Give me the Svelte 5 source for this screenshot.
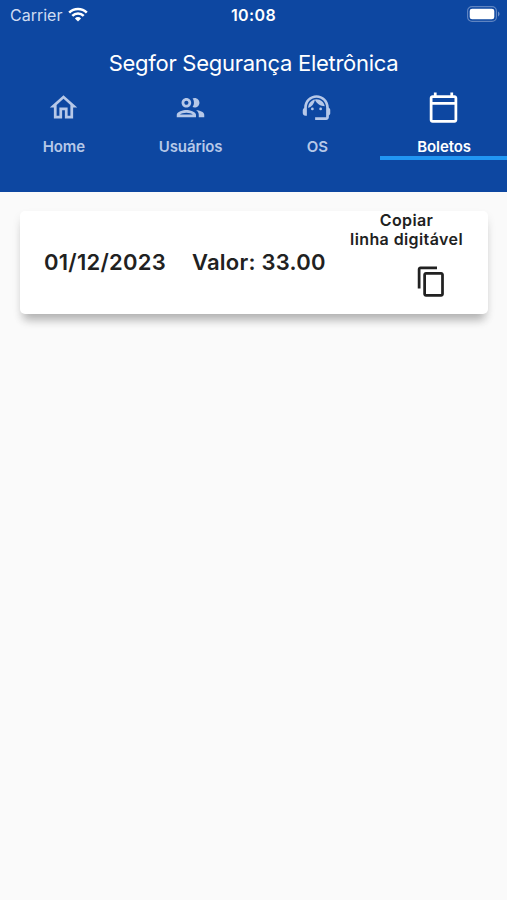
<script>
	let active = 'Boletos'

	const tabs = [
		{
			label: 'Home',
			path: 'M12 5.69l5 4.5V18h-2v-6H9v6H7v-7.81l5-4.5M12 3L2 12h3v8h6v-6h2v6h6v-8h3L12 3z'
		},
		{
			label: 'Usuários',
			path: 'M9 13.75c-2.34 0-7 1.17-7 3.5V19h14v-1.75c0-2.33-4.66-3.5-7-3.5zM4.34 17c.84-.58 2.87-1.25 4.66-1.25s3.82.67 4.66 1.25H4.34zM9 12c1.93 0 3.5-1.57 3.5-3.5S10.93 5 9 5 5.5 6.57 5.5 8.5 7.07 12 9 12zm0-5c.83 0 1.5.67 1.5 1.5S9.83 10 9 10s-1.5-.67-1.5-1.5S8.17 7 9 7zm7.04 6.81c1.16.84 1.96 1.96 1.96 3.44V19h4v-1.75c0-2.02-3.5-3.17-5.96-3.44zM15 12c1.93 0 3.5-1.57 3.5-3.5S16.93 5 15 5c-.54 0-1.04.13-1.5.35.63.89 1 1.98 1 3.15s-.37 2.26-1 3.15c.46.22.96.35 1.5.35z'
		},
		{
			label: 'OS',
			path: 'M21 12.22C21 6.73 16.74 3 12 3c-4.69 0-9 3.65-9 9.28-.6.34-1 .98-1 1.72v2c0 1.1.9 2 2 2h1v-6.1c0-3.87 3.13-7 7-7s7 3.13 7 7V19h-8v2h8c1.1 0 2-.9 2-2v-1.22c.59-.31 1-.92 1-1.64v-2.3c0-.7-.41-1.31-1-1.62zM8 13a1 1 0 1 0 2 0 1 1 0 1 0-2 0zM14 13a1 1 0 1 0 2 0 1 1 0 1 0-2 0zM18 11.03C17.52 8.18 15.04 6 12.05 6c-3.03 0-6.29 2.51-6.03 6.45 2.47-1.01 4.33-3.21 4.86-5.89 1.31 2.63 4 4.44 7.12 4.47z'
		},
		{
			label: 'Boletos',
			path: 'M20 3h-1V1h-2v2H7V1H5v2H4c-1.1 0-2 .9-2 2v16c0 1.1.9 2 2 2h16c1.1 0 2-.9 2-2V5c0-1.1-.9-2-2-2zm0 2v3H4V5h16zM4 21V10h16v11H4z'
		}
	]

	let boletos = [{vencimento: '01/12/2023', valor: '33.00', linha: ''}]

	function copiar(boleto) {
		navigator.clipboard?.writeText(boleto.linha)
	}
</script>

<main>
	<header>
		<div class="status">
			<div class="carrier">
				<span>Carrier</span>
				<svg class="wifi" viewBox="0 0 20 15">
					<path d="M1.2 5.6a12.6 12.6 0 0 1 17.6 0" />
					<path d="M4.3 8.8a8.1 8.1 0 0 1 11.4 0" />
					<path class="dot" d="M10 14.6L6.9 11.4a4.4 4.4 0 0 1 6.2 0z" />
				</svg>
			</div>
			<span class="time">10:08</span>
			<div class="power">
				<svg class="battery" viewBox="0 0 33 16">
					<rect class="shell" x="0.6" y="0.6" width="28.8" height="14.8" rx="4.4" />
					<rect class="charge" x="2.7" y="2.7" width="24.6" height="10.6" rx="2.4" />
					<path class="tip" d="M31 5.6c2 .8 2 4 0 4.8z" />
				</svg>
			</div>
		</div>
		<h1>Segfor Segurança Eletrônica</h1>
		<nav>
			{#each tabs as tab}
				<button class="tab" class:active={tab.label === active} on:click={() => (active = tab.label)}>
					<svg class="icon" viewBox="0 0 24 24"><path d={tab.path} /></svg>
					<span>{tab.label}</span>
				</button>
			{/each}
		</nav>
	</header>

	{#each boletos as boleto}
		<section class="card">
			<span class="date">{boleto.vencimento}</span>
			<span class="value">Valor: {boleto.valor}</span>
			<div class="copy">
				<p>Copiar<br>linha digitável</p>
				<button on:click={() => copiar(boleto)} aria-label="Copiar linha digitável">
					<svg class="icon" viewBox="0 0 24 24">
						<path d="M16 1H4c-1.1 0-2 .9-2 2v14h2V3h12V1zm3 4H8c-1.1 0-2 .9-2 2v14c0 1.1.9 2 2 2h11c1.1 0 2-.9 2-2V7c0-1.1-.9-2-2-2zm0 16H8V7h11v14z" />
					</svg>
				</button>
			</div>
		</section>
	{/each}
</main>

<style>
	:global(body) {
		margin: 0;
		background: #fafafa;
	}
	main {
		min-height: 900px;
		font-family: Inter, "Liberation Sans", sans-serif;
		color: #212121;
		background: #fafafa;
	}
	header {
		box-sizing: border-box;
		height: 192px;
		color: #fff;
		background: #0d47a1;
	}
	.status {
		display: grid;
		grid-template-columns: 1fr auto 1fr;
		align-items: center;
		height: 29px;
		padding: 0 7px 0 10px;
	}
	.carrier {
		display: flex;
		align-items: center;
		gap: 6px;
		font-size: 16px;
		color: #cfdcf2;
	}
	.wifi {
		width: 20px;
		height: 15px;
		fill: none;
		stroke: #fff;
		stroke-width: 2.6;
	}
	.wifi .dot {
		fill: #fff;
		stroke: none;
	}
	.time {
		margin-right: 3px;
		font-size: 16px;
		font-weight: 600;
		letter-spacing: 0.4px;
	}
	.power {
		display: flex;
		justify-content: flex-end;
	}
	.battery {
		width: 33px;
		height: 16px;
		margin-bottom: 1px;
	}
	.shell {
		fill: none;
		stroke: #5f84c1;
		stroke-width: 1.2;
	}
	.charge {
		fill: #fff;
	}
	.tip {
		fill: #6d8fc7;
	}
	h1 {
		margin: 0;
		padding-top: 19px;
		font-size: 22px;
		font-weight: 400;
		line-height: 30px;
		letter-spacing: -0.28px;
		text-align: center;
		white-space: nowrap;
	}
	nav {
		display: grid;
		grid-template-columns: repeat(4, 1fr);
		margin-top: 13px;
	}
	button {
		padding: 0;
		border: 0;
		font: inherit;
		color: inherit;
		background: none;
	}
	.icon {
		display: block;
		flex-shrink: 0;
		width: 33px;
		height: 33px;
		fill: currentColor;
	}
	.tab {
		box-sizing: border-box;
		display: flex;
		flex-direction: column;
		align-items: center;
		gap: 15px;
		height: 69px;
		border-bottom: 4px solid transparent;
		font-size: 15px;
		font-weight: 600;
		line-height: 16px;
		letter-spacing: -0.1px;
		color: #b6c8e8;
	}
	.tab span {
		padding-left: 1px;
	}
	.tab.active {
		color: #fff;
		border-color: #2196f3;
	}
	.card {
		box-sizing: border-box;
		display: flex;
		align-items: center;
		height: 103px;
		margin: 19px 19px 0 20px;
		padding: 0 24px;
		border-radius: 5px;
		font-size: 22px;
		font-weight: 600;
		letter-spacing: 0.25px;
		white-space: nowrap;
		background: #fff;
		box-shadow: 0 10px 10px -4px rgba(0, 0, 0, 0.24), 0 5px 10px rgba(0, 0, 0, 0.08);
	}
	.date,
	.value {
		margin-bottom: 2px;
	}
	.value {
		margin-left: 26px;
	}
	.copy {
		display: flex;
		flex-direction: column;
		align-items: center;
		align-self: flex-start;
		margin: 0 1px 0 auto;
	}
	.copy p {
		margin: 0;
		font-size: 16px;
		line-height: 19px;
		letter-spacing: 0.4px;
		text-align: center;
	}
	.copy button {
		margin: 16px 0 0 49px;
	}
</style>
